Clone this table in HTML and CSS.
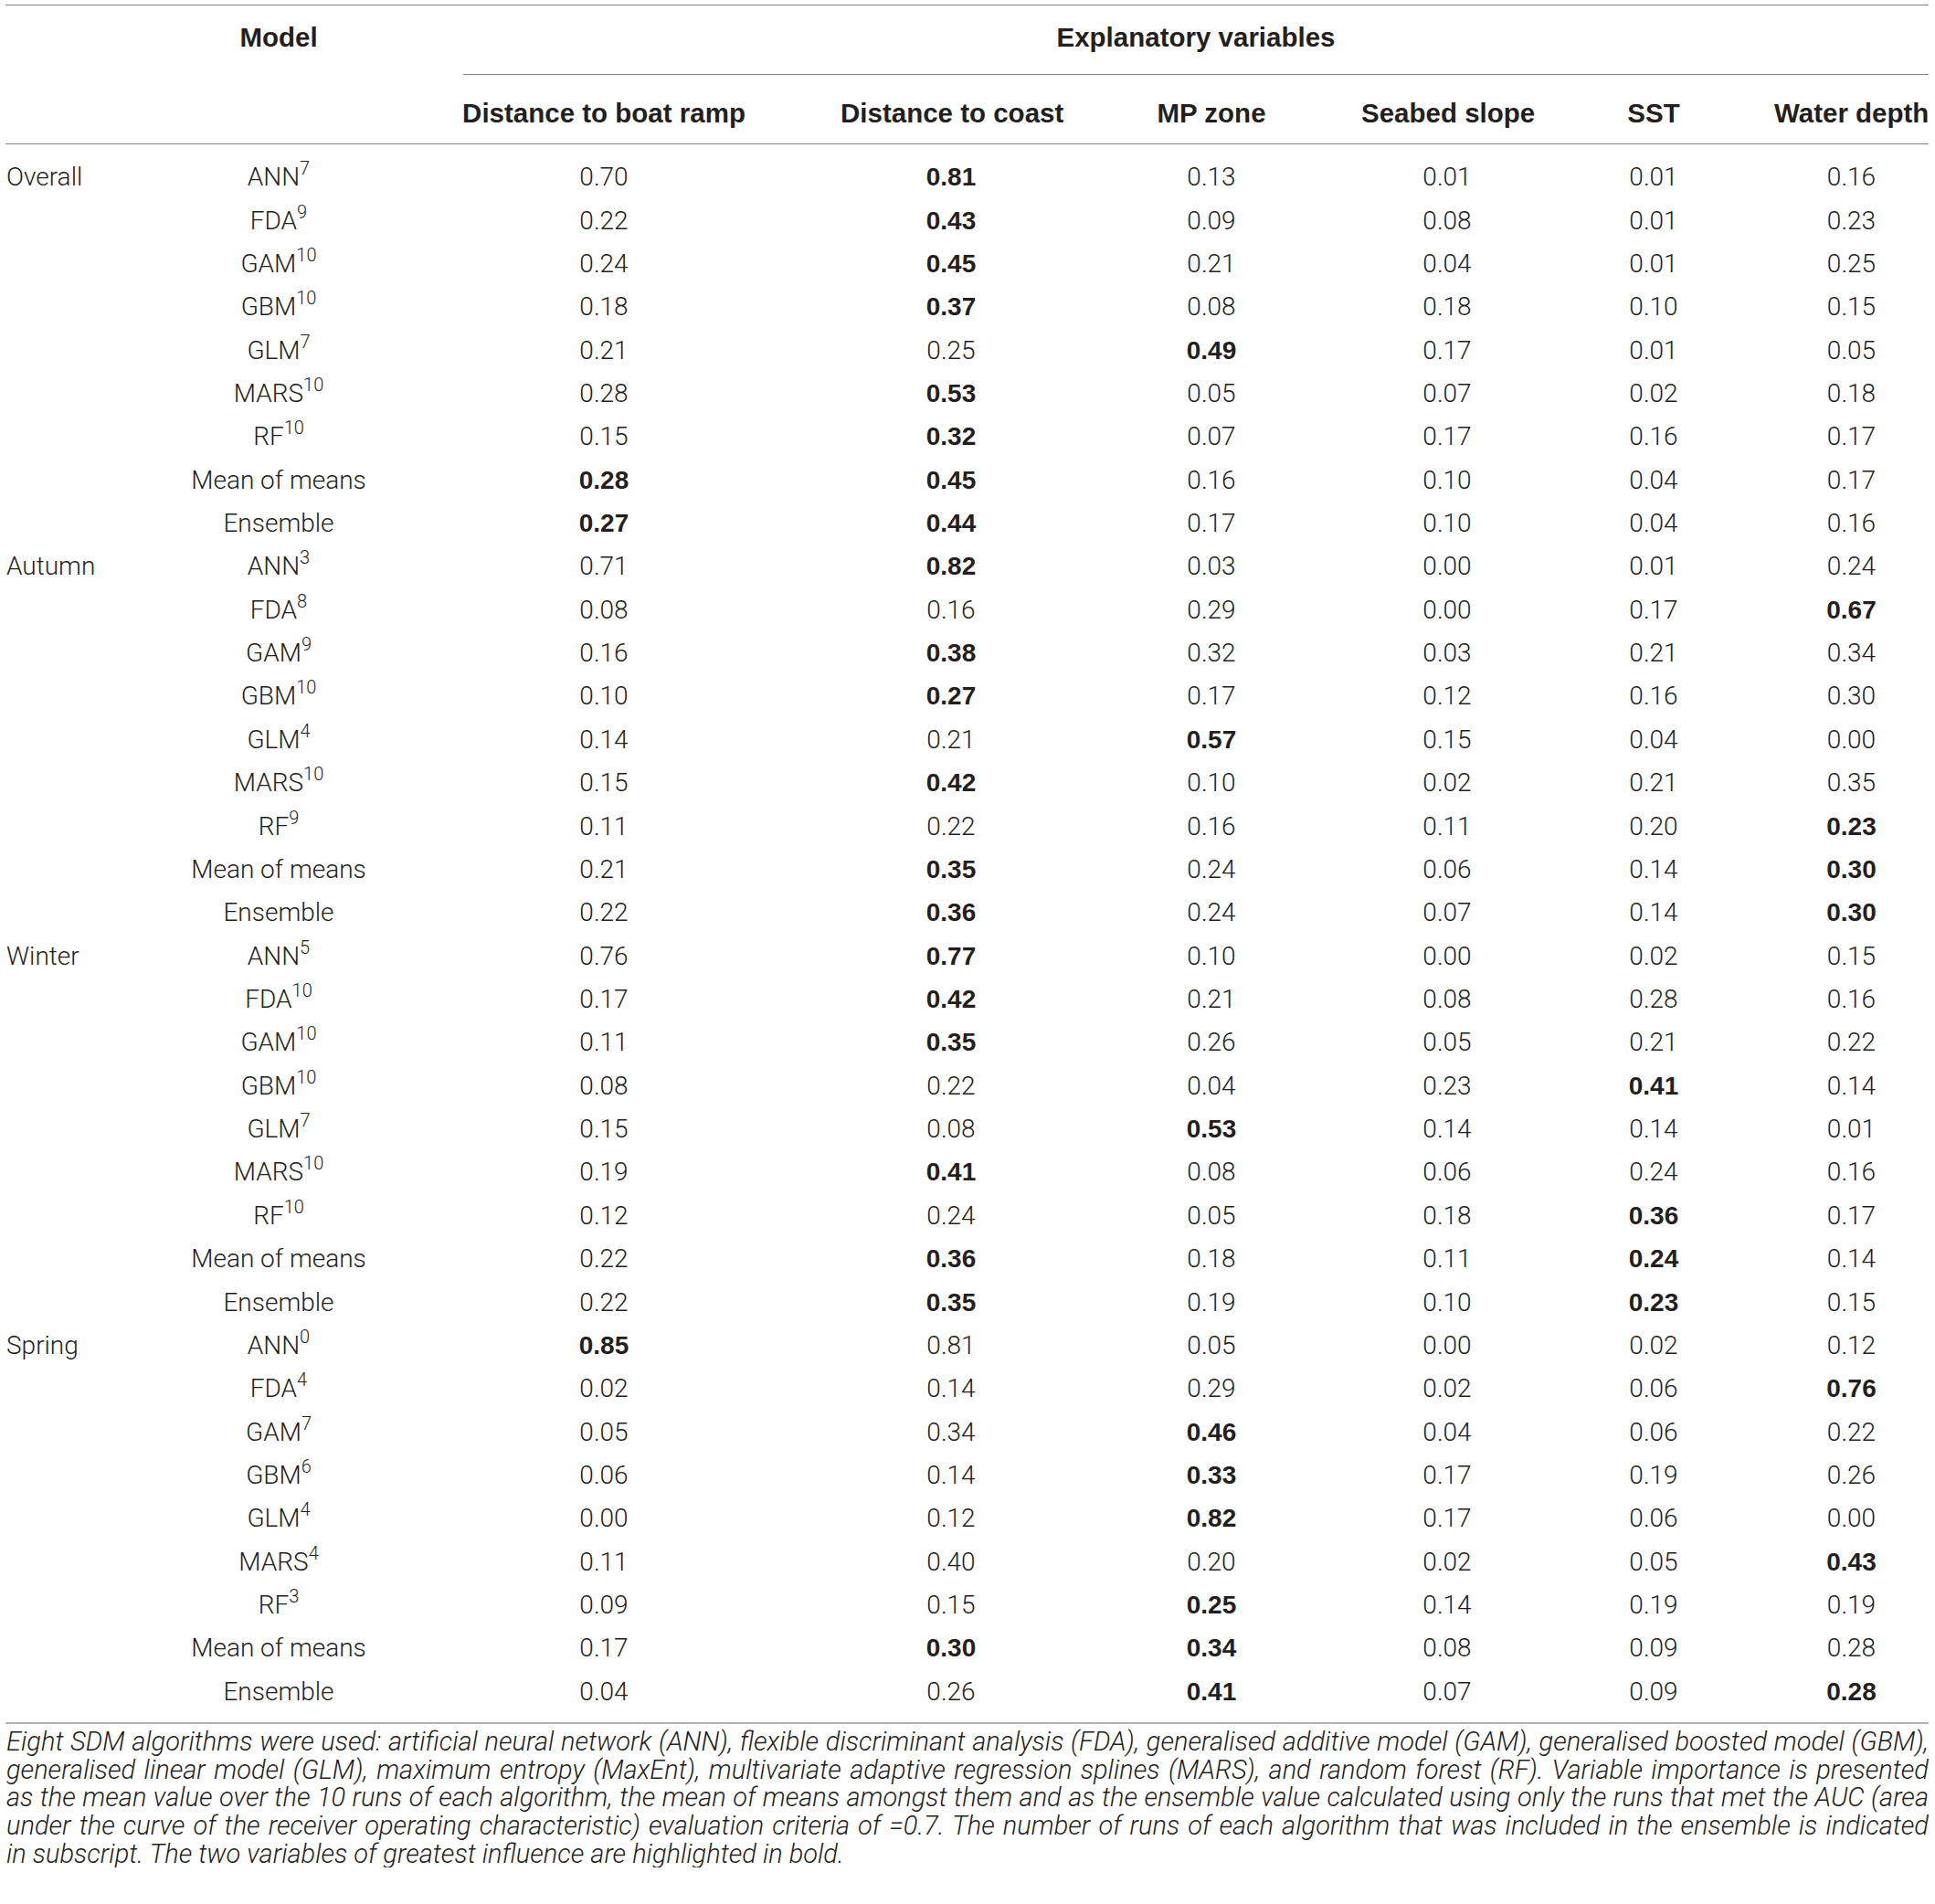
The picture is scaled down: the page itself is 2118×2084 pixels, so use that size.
FILE: index.html
```html
<!DOCTYPE html>
<html lang="en">
  <head>
    <meta charset="UTF-8" />
    <meta name="viewport" content="width=device-width, initial-scale=1.0" />
    <title>Variable importance</title>
    <link rel="stylesheet" href="styles.css">
  </head>
  <body>
    <div class="page">
      <table class="vi">
        <colgroup>
          <col class="cSeason">
          <col class="cModel">
          <col class="cRamp">
          <col class="cCoast">
          <col class="cZone">
          <col class="cSlope">
          <col class="cSst">
          <col class="cDepth">
        </colgroup>
        <thead>
          <tr class="top">
            <th></th>
            <th>Model</th>
            <th class="explanatory" colspan="6"><span>Explanatory variables</span></th>
          </tr>
          <tr class="vars">
            <th></th>
            <th></th>
            <th>Distance to boat ramp</th>
            <th>Distance to coast</th>
            <th>MP zone</th>
            <th>Seabed slope</th>
            <th>SST</th>
            <th>Water depth</th>
          </tr>
        </thead>
        <tbody>
          <tr class="first"><td>Overall</td><td>ANN<sup>7</sup></td><td>0.70</td><td><strong>0.81</strong></td><td>0.13</td><td>0.01</td><td>0.01</td><td>0.16</td></tr>
          <tr><td></td><td>FDA<sup>9</sup></td><td>0.22</td><td><strong>0.43</strong></td><td>0.09</td><td>0.08</td><td>0.01</td><td>0.23</td></tr>
          <tr><td></td><td>GAM<sup>10</sup></td><td>0.24</td><td><strong>0.45</strong></td><td>0.21</td><td>0.04</td><td>0.01</td><td>0.25</td></tr>
          <tr><td></td><td>GBM<sup>10</sup></td><td>0.18</td><td><strong>0.37</strong></td><td>0.08</td><td>0.18</td><td>0.10</td><td>0.15</td></tr>
          <tr><td></td><td>GLM<sup>7</sup></td><td>0.21</td><td>0.25</td><td><strong>0.49</strong></td><td>0.17</td><td>0.01</td><td>0.05</td></tr>
          <tr><td></td><td>MARS<sup>10</sup></td><td>0.28</td><td><strong>0.53</strong></td><td>0.05</td><td>0.07</td><td>0.02</td><td>0.18</td></tr>
          <tr><td></td><td>RF<sup>10</sup></td><td>0.15</td><td><strong>0.32</strong></td><td>0.07</td><td>0.17</td><td>0.16</td><td>0.17</td></tr>
          <tr><td></td><td>Mean of means</td><td><strong>0.28</strong></td><td><strong>0.45</strong></td><td>0.16</td><td>0.10</td><td>0.04</td><td>0.17</td></tr>
          <tr><td></td><td>Ensemble</td><td><strong>0.27</strong></td><td><strong>0.44</strong></td><td>0.17</td><td>0.10</td><td>0.04</td><td>0.16</td></tr>

          <tr><td>Autumn</td><td>ANN<sup>3</sup></td><td>0.71</td><td><strong>0.82</strong></td><td>0.03</td><td>0.00</td><td>0.01</td><td>0.24</td></tr>
          <tr><td></td><td>FDA<sup>8</sup></td><td>0.08</td><td>0.16</td><td>0.29</td><td>0.00</td><td>0.17</td><td><strong>0.67</strong></td></tr>
          <tr><td></td><td>GAM<sup>9</sup></td><td>0.16</td><td><strong>0.38</strong></td><td>0.32</td><td>0.03</td><td>0.21</td><td>0.34</td></tr>
          <tr><td></td><td>GBM<sup>10</sup></td><td>0.10</td><td><strong>0.27</strong></td><td>0.17</td><td>0.12</td><td>0.16</td><td>0.30</td></tr>
          <tr><td></td><td>GLM<sup>4</sup></td><td>0.14</td><td>0.21</td><td><strong>0.57</strong></td><td>0.15</td><td>0.04</td><td>0.00</td></tr>
          <tr><td></td><td>MARS<sup>10</sup></td><td>0.15</td><td><strong>0.42</strong></td><td>0.10</td><td>0.02</td><td>0.21</td><td>0.35</td></tr>
          <tr><td></td><td>RF<sup>9</sup></td><td>0.11</td><td>0.22</td><td>0.16</td><td>0.11</td><td>0.20</td><td><strong>0.23</strong></td></tr>
          <tr><td></td><td>Mean of means</td><td>0.21</td><td><strong>0.35</strong></td><td>0.24</td><td>0.06</td><td>0.14</td><td><strong>0.30</strong></td></tr>
          <tr><td></td><td>Ensemble</td><td>0.22</td><td><strong>0.36</strong></td><td>0.24</td><td>0.07</td><td>0.14</td><td><strong>0.30</strong></td></tr>

          <tr><td>Winter</td><td>ANN<sup>5</sup></td><td>0.76</td><td><strong>0.77</strong></td><td>0.10</td><td>0.00</td><td>0.02</td><td>0.15</td></tr>
          <tr><td></td><td>FDA<sup>10</sup></td><td>0.17</td><td><strong>0.42</strong></td><td>0.21</td><td>0.08</td><td>0.28</td><td>0.16</td></tr>
          <tr><td></td><td>GAM<sup>10</sup></td><td>0.11</td><td><strong>0.35</strong></td><td>0.26</td><td>0.05</td><td>0.21</td><td>0.22</td></tr>
          <tr><td></td><td>GBM<sup>10</sup></td><td>0.08</td><td>0.22</td><td>0.04</td><td>0.23</td><td><strong>0.41</strong></td><td>0.14</td></tr>
          <tr><td></td><td>GLM<sup>7</sup></td><td>0.15</td><td>0.08</td><td><strong>0.53</strong></td><td>0.14</td><td>0.14</td><td>0.01</td></tr>
          <tr><td></td><td>MARS<sup>10</sup></td><td>0.19</td><td><strong>0.41</strong></td><td>0.08</td><td>0.06</td><td>0.24</td><td>0.16</td></tr>
          <tr><td></td><td>RF<sup>10</sup></td><td>0.12</td><td>0.24</td><td>0.05</td><td>0.18</td><td><strong>0.36</strong></td><td>0.17</td></tr>
          <tr><td></td><td>Mean of means</td><td>0.22</td><td><strong>0.36</strong></td><td>0.18</td><td>0.11</td><td><strong>0.24</strong></td><td>0.14</td></tr>
          <tr><td></td><td>Ensemble</td><td>0.22</td><td><strong>0.35</strong></td><td>0.19</td><td>0.10</td><td><strong>0.23</strong></td><td>0.15</td></tr>

          <tr><td>Spring</td><td>ANN<sup>0</sup></td><td><strong>0.85</strong></td><td>0.81</td><td>0.05</td><td>0.00</td><td>0.02</td><td>0.12</td></tr>
          <tr><td></td><td>FDA<sup>4</sup></td><td>0.02</td><td>0.14</td><td>0.29</td><td>0.02</td><td>0.06</td><td><strong>0.76</strong></td></tr>
          <tr><td></td><td>GAM<sup>7</sup></td><td>0.05</td><td>0.34</td><td><strong>0.46</strong></td><td>0.04</td><td>0.06</td><td>0.22</td></tr>
          <tr><td></td><td>GBM<sup>6</sup></td><td>0.06</td><td>0.14</td><td><strong>0.33</strong></td><td>0.17</td><td>0.19</td><td>0.26</td></tr>
          <tr><td></td><td>GLM<sup>4</sup></td><td>0.00</td><td>0.12</td><td><strong>0.82</strong></td><td>0.17</td><td>0.06</td><td>0.00</td></tr>
          <tr><td></td><td>MARS<sup>4</sup></td><td>0.11</td><td>0.40</td><td>0.20</td><td>0.02</td><td>0.05</td><td><strong>0.43</strong></td></tr>
          <tr><td></td><td>RF<sup>3</sup></td><td>0.09</td><td>0.15</td><td><strong>0.25</strong></td><td>0.14</td><td>0.19</td><td>0.19</td></tr>
          <tr><td></td><td>Mean of means</td><td>0.17</td><td><strong>0.30</strong></td><td><strong>0.34</strong></td><td>0.08</td><td>0.09</td><td>0.28</td></tr>
          <tr class="last"><td></td><td>Ensemble</td><td>0.04</td><td>0.26</td><td><strong>0.41</strong></td><td>0.07</td><td>0.09</td><td><strong>0.28</strong></td></tr>
        </tbody>
      </table>

      <p class="note">
        <span>Eight SDM algorithms were used: artificial neural network (ANN), flexible discriminant analysis (FDA), generalised additive model (GAM), generalised boosted model (GBM),</span>
        <span>generalised linear model (GLM), maximum entropy (MaxEnt), multivariate adaptive regression splines (MARS), and random forest (RF). Variable importance is presented</span>
        <span>as the mean value over the 10 runs of each algorithm, the mean of means amongst them and as the ensemble value calculated using only the runs that met the AUC (area</span>
        <span>under the curve of the receiver operating characteristic) evaluation criteria of =0.7. The number of runs of each algorithm that was included in the ensemble is indicated</span>
        <span class="end">in subscript. The two variables of greatest influence are highlighted in bold.</span>
      </p>
    </div>
  </body>
</html>
```

FILE: styles.css
```css
body {
  margin: 0;
  background-color: white;
  color: #231f20;
  font-family: Roboto, "Liberation Sans", sans-serif;
  font-weight: 300;
}

.page {
  width: 2105px;
  padding: 5px 0 0 6px;
}

.vi {
  width: 2105px;
  table-layout: fixed;
  border-collapse: collapse;
  font-size: 28px;
}
.cSeason { width: 202px; }
.cModel { width: 194px; }
.cRamp { width: 518px; }
.cCoast { width: 242px; }
.cZone { width: 328px; }
.cSlope { width: 188px; }
.cSst { width: 264px; }
.cDepth { width: 169px; }

.vi th {
  font-family: "Liberation Sans", Arial, sans-serif;
  font-weight: 700;
  font-size: 29.5px;
  text-align: center;
  white-space: nowrap;
  padding: 0;
}
.vi tr.top th {
  height: 70px;
  border-top: 1px solid #858585;
  padding-bottom: 6px;
}
.vi tr.vars th {
  height: 67px;
  padding-top: 8px;
  border-bottom: 1px solid #858585;
}
.vi th.explanatory {
  padding-left: 105px;
  background: linear-gradient(#858585, #858585) no-repeat right bottom / calc(100% - 105px) 1px;
}

.vi td {
  height: 47.36px;
  padding: 0;
  text-align: center;
  white-space: nowrap;
}
.vi td:first-child {
  text-align: left;
  padding-left: 1px;
}
.vi tr.first td {
  padding-top: 12px;
}
.vi tr.last td {
  padding-bottom: 10px;
  border-bottom: 2px solid #b4b4b4;
}
.vi strong {
  font-family: "Liberation Sans", Arial, sans-serif;
  font-weight: 700;
}
.vi sup {
  font-size: 20px;
  line-height: 0;
  vertical-align: 12px;
}

.note {
  margin: 0;
  padding: 4px 0 0 1px;
  font-size: 29px;
  line-height: 30.7px;
  font-style: italic;
}
.note span {
  display: block;
  white-space: nowrap;
  text-align: justify;
  text-align-last: justify;
}
.note span.end {
  text-align-last: left;
}
```
